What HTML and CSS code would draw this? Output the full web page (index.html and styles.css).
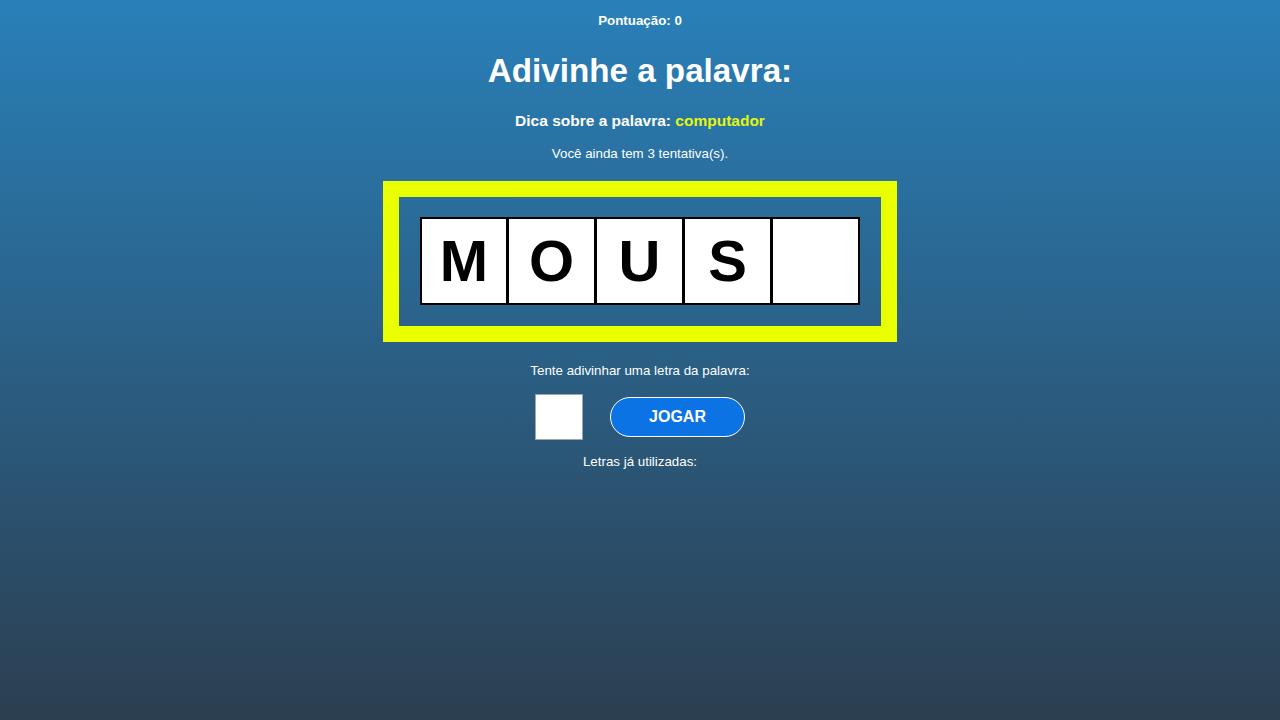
FILE: index.html
```html
<!DOCTYPE html>
<html lang="pt-BR">
<head>
<meta charset="utf-8">
<title>Adivinhe a palavra</title>
<link rel="stylesheet" href="styles.css">
</head>
<body>
<main class="game">
  <p class="score">Pontuação: 0</p>
  <h1 class="title">Adivinhe a palavra:</h1>
  <p class="hint">Dica sobre a palavra: <span class="hint-word">computador</span></p>
  <p class="tries">Você ainda tem 3 tentativa(s).</p>
  <div class="frame">
    <div class="tiles">
      <div class="tile">M</div>
      <div class="tile">O</div>
      <div class="tile">U</div>
      <div class="tile">S</div>
      <div class="tile"></div>
    </div>
  </div>
  <p class="prompt">Tente adivinhar uma letra da palavra:</p>
  <div class="guess-row">
    <input class="guess-input" type="text" maxlength="1">
    <button class="play-btn" type="button">JOGAR</button>
  </div>
  <p class="used">Letras já utilizadas:</p>
</main>
</body>
</html>
```
FILE: styles.css
```css
html, body {
  margin: 0;
  padding: 0;
}
body {
  min-height: 100vh;
  background: linear-gradient(to bottom, #2980b9, #2c3e50);
  font-family: "Liberation Sans", Arial, sans-serif;
  color: #ffffff;
}
.game {
  display: flex;
  flex-direction: column;
  align-items: center;
  text-align: center;
}
.score {
  margin: 13px 0 0;
  font-size: 13.33px;
  line-height: 16px;
  font-weight: bold;
}
.title {
  margin: 22px 0 0;
  font-size: 33.2px;
  line-height: 40px;
  font-weight: bold;
}
.hint {
  margin: 21px 0 0;
  font-size: 15.5px;
  line-height: 18px;
  font-weight: bold;
}
.hint-word {
  color: #e5f50e;
}
.tries {
  margin: 16px 0 0;
  font-size: 13.33px;
  line-height: 16px;
}
.frame {
  margin-top: 19px;
  box-sizing: border-box;
  width: 514px;
  height: 161px;
  border: 16px solid #eaff00;
  display: flex;
  align-items: center;
  justify-content: center;
  padding-bottom: 2px;
}
.tiles {
  display: flex;
}
.tile {
  box-sizing: border-box;
  width: 88px;
  height: 88px;
  border: 2px solid #000;
  background: #ffffff;
  color: #000;
  font-size: 58px;
  font-weight: bold;
  display: flex;
  align-items: center;
  justify-content: center;
}
.tile + .tile {
  border-left-width: 1px;
}
.prompt {
  margin: 21px 0 0;
  font-size: 13.33px;
  line-height: 16px;
}
.guess-row {
  margin-top: 15px;
  display: flex;
  align-items: center;
  gap: 27px;
}
.guess-input {
  box-sizing: border-box;
  width: 48px;
  height: 46px;
  margin: 0;
  border: 1px solid #9aa6b2;
  background: #ffffff;
  font-size: 24px;
  text-align: center;
}
.play-btn {
  box-sizing: border-box;
  width: 135px;
  height: 40px;
  border: 1.5px solid #ffffff;
  border-radius: 20px;
  background: #0b73e3;
  color: #ffffff;
  font-family: "Liberation Sans", Arial, sans-serif;
  font-size: 16px;
  font-weight: bold;
  cursor: pointer;
}
.used {
  margin: 14px 0 0;
  font-size: 13.33px;
  line-height: 16px;
}
```
